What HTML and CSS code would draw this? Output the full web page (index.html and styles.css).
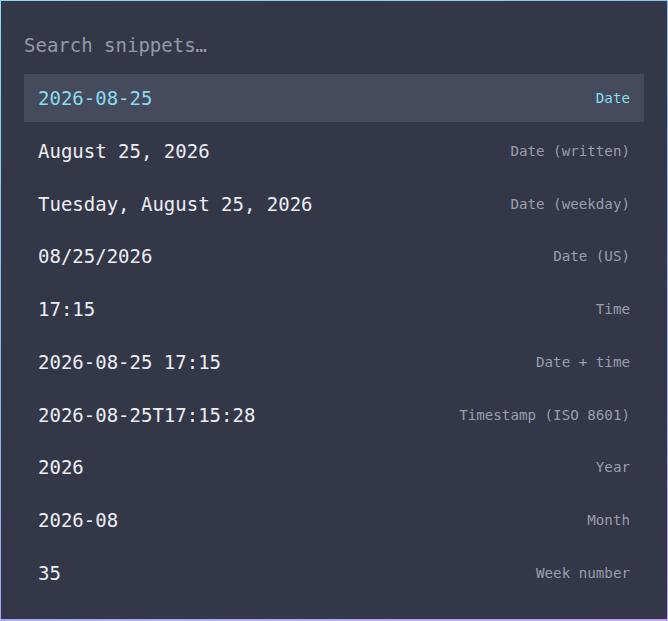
FILE: index.html
```html
<!DOCTYPE html>
<html>
<head>
<meta charset="utf-8">
<link rel="stylesheet" href="styles.css">
</head>
<body>
<div class="panel">
  <div class="search">Search snippets…</div>
  <ul class="list">
    <li class="row active"><span class="value">2026-08-25</span><span class="label">Date</span></li>
    <li class="row"><span class="value">August 25, 2026</span><span class="label">Date (written)</span></li>
    <li class="row"><span class="value">Tuesday, August 25, 2026</span><span class="label">Date (weekday)</span></li>
    <li class="row"><span class="value">08/25/2026</span><span class="label">Date (US)</span></li>
    <li class="row"><span class="value">17:15</span><span class="label">Time</span></li>
    <li class="row"><span class="value">2026-08-25 17:15</span><span class="label">Date + time</span></li>
    <li class="row"><span class="value">2026-08-25T17:15:28</span><span class="label">Timestamp (ISO 8601)</span></li>
    <li class="row"><span class="value">2026</span><span class="label">Year</span></li>
    <li class="row"><span class="value">2026-08</span><span class="label">Month</span></li>
    <li class="row"><span class="value">35</span><span class="label">Week number</span></li>
  </ul>
</div>
</body>
</html>
```
FILE: styles.css
```css
html, body {
  margin: 0;
  padding: 0;
  background: #343748;
}
.panel {
  box-sizing: border-box;
  width: 668px;
  height: 621px;
  border: 1px solid transparent;
  border-bottom-width: 2px;
  border-image: linear-gradient(160deg, #89dceb 0%, #8fb4f0 50%, #c3a0f5 100%) 1;
  background: #343748;
  padding: 24px 23px 0 23px;
  font-family: "DejaVu Sans Mono", "Liberation Mono", monospace;
}
.search {
  height: 42px;
  line-height: 42px;
  font-size: 19px;
  color: #9699a9;
  margin-bottom: 8px;
  margin-top: -1px;
}
.list {
  list-style: none;
  margin: 0;
  padding: 0;
  display: flex;
  flex-direction: column;
  gap: 4.75px;
}
.row {
  height: 48px;
  display: flex;
  align-items: center;
  justify-content: space-between;
  padding: 0 14px;
}
.row.active {
  background: #464a5d;
}
.value {
  font-size: 19px;
  color: #eceef4;
}
.label {
  font-size: 14.2px;
  color: #9a9eae;
}
.active .value,
.active .label {
  color: #89dceb;
}
```
